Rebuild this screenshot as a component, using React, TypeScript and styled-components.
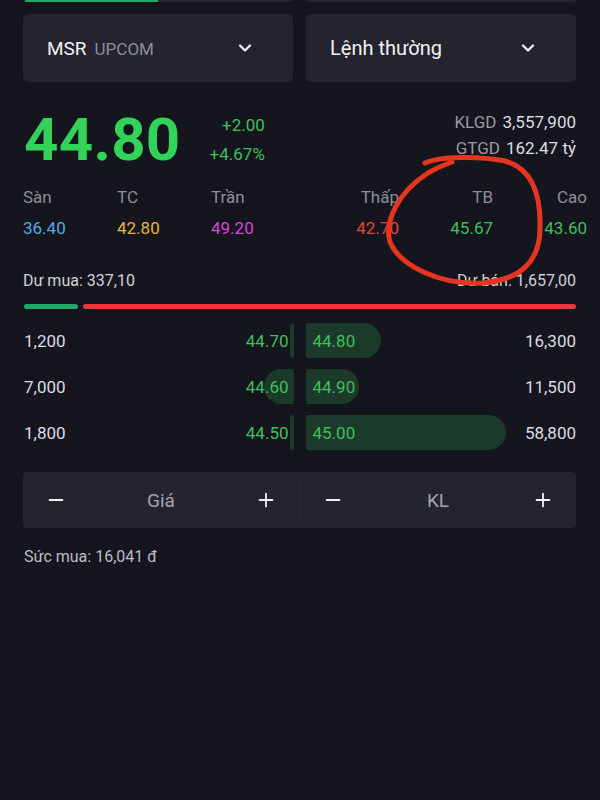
import * as React from "react";
import styled, { createGlobalStyle } from "styled-components";
import { ChevronDown, Minus, Plus } from "lucide-react";

const GlobalStyle = createGlobalStyle`
  html, body {
    margin: 0;
    padding: 0;
    background: #15151e;
  }
  body {
    font-family: Roboto, "Noto Sans", sans-serif;
    color: #e6e6ea;
  }
`;

const Page = styled.div`
  position: relative;
  width: 600px;
  height: 800px;
  box-sizing: border-box;
  padding: 0 24px 0 23px;
  background: #15151e;
  overflow: hidden;
`;

const TopStrip = styled.div`
  display: flex;
  gap: 13px;
  height: 2px;
`;

const StripCard = styled.div`
  flex: 1;
  background: #24242e;
  border-radius: 0 0 3px 3px;
  overflow: hidden;
`;

const StripFill = styled.div<{ $w: number }>`
  width: ${(p) => p.$w}px;
  height: 100%;
  margin-left: 2px;
  background: #1fa868;
`;

const SelectRow = styled.div`
  display: flex;
  gap: 13px;
  margin-top: 12px;
`;

const SelectBox = styled.div`
  flex: 1;
  height: 68px;
  box-sizing: border-box;
  display: flex;
  align-items: center;
  justify-content: space-between;
  padding: 0 38px 0 24px;
  background: #24242e;
  border-radius: 5px;
  color: #f2f2f4;
`;

const SelectText = styled.div`
  display: flex;
  align-items: baseline;
  gap: 8px;
`;

const Symbol = styled.span`
  font-size: 19px;
`;

const Exchange = styled.span`
  font-size: 17px;
  color: #8e8e96;
`;

const OrderType = styled.span`
  font-size: 20px;
`;

const PriceBlock = styled.div`
  display: flex;
  align-items: flex-start;
  margin-top: 23px;
`;

const BigPrice = styled.div`
  font-size: 60px;
  font-weight: 700;
  line-height: 70px;
  color: #33d35a;
  margin-left: 1px;
  letter-spacing: 0.3px;
`;

const ChangeCol = styled.div`
  display: flex;
  flex-direction: column;
  align-items: flex-end;
  gap: 8px;
  margin-left: 29px;
  padding-top: 10px;
  font-size: 17px;
  line-height: 21px;
  color: #3fbf5d;
`;

const VolumeCol = styled.div`
  margin-left: auto;
  display: flex;
  flex-direction: column;
  align-items: flex-end;
  gap: 5px;
  padding-top: 7px;
  font-size: 17px;
  line-height: 21px;
`;

const VolLine = styled.div`
  display: flex;
  gap: 6px;
`;

const VolLabel = styled.span`
  color: #9a9aa2;
`;

const VolValue = styled.span`
  color: #dedee2;
`;

const StatsRow = styled.div`
  display: flex;
  justify-content: space-between;
  margin-top: 11px;
`;

const StatsGroup = styled.div`
  display: flex;
`;

const Stat = styled.div<{ $right?: boolean }>`
  width: 94px;
  display: flex;
  flex-direction: column;
  align-items: ${(p) => (p.$right ? "flex-end" : "flex-start")};
  gap: 9px;
  font-size: 17px;
  line-height: 22px;
`;

const StatLabel = styled.span`
  color: #8e8e96;
`;

const StatValue = styled.span<{ $color: string }>`
  color: ${(p) => p.$color};
`;

const DepthRow = styled.div`
  display: flex;
  justify-content: space-between;
  margin-top: 32px;
  font-size: 16px;
  line-height: 20px;
  color: #d2d2d6;
`;

const RatioBar = styled.div`
  display: flex;
  gap: 5px;
  margin-top: 13px;
  height: 5px;
  padding-left: 1px;
`;

const RatioPart = styled.div<{ $color: string }>`
  height: 100%;
  border-radius: 3px;
  background: ${(p) => p.$color};
`;

const Book = styled.div`
  display: flex;
  flex-direction: column;
  gap: 11px;
  margin-top: 14px;
`;

const BookRow = styled.div`
  display: flex;
  gap: 12px;
  height: 35px;
  font-size: 17px;
`;

const Side = styled.div`
  position: relative;
  flex: 1;
  display: flex;
  align-items: center;
  justify-content: space-between;
`;

const DepthBar = styled.div<{ $side: "bid" | "ask" }>`
  position: absolute;
  top: 0;
  bottom: 0;
  ${(p) => (p.$side === "bid" ? "right: 0;" : "left: 0;")}
  background: #1c3a29;
  border-radius: ${(p) => (p.$side === "bid" ? "18px 2px 2px 18px" : "2px 18px 18px 2px")};
`;

const Qty = styled.span`
  position: relative;
  color: #dcdce0;
  padding-left: 1px;
`;

const BookPrice = styled.span<{ $side: "bid" | "ask" }>`
  position: relative;
  color: #3fbf5d;
  ${(p) => (p.$side === "bid" ? "padding-right: 5px;" : "padding-left: 7px;")}
`;

const InputRow = styled.div`
  display: flex;
  align-items: center;
  height: 56px;
  margin-top: 22px;
  background: #24242e;
  border-radius: 4px;
`;

const Stepper = styled.div`
  flex: 1;
  display: flex;
  align-items: center;
  justify-content: space-between;
  padding: 0 22px;
  color: #f0f0f2;
`;

const Divider = styled.div`
  width: 1px;
  height: 38px;
  background: #292933;
`;

const StepperLabel = styled.span`
  font-size: 19px;
  color: #a2a2aa;
`;

const Power = styled.div`
  margin-top: 19px;
  font-size: 16px;
  color: #bdbdc4;
  padding-left: 1px;
`;

const Annotation = styled.svg`
  position: absolute;
  left: 0;
  top: 0;
  pointer-events: none;
`;

type Level = { qty: string; price: string; bar: number };

const bids: Level[] = [
  { qty: "1,200", price: "44.70", bar: 4 },
  { qty: "7,000", price: "44.60", bar: 30 },
  { qty: "1,800", price: "44.50", bar: 4 },
];

const asks: Level[] = [
  { qty: "16,300", price: "44.80", bar: 75 },
  { qty: "11,500", price: "44.90", bar: 53 },
  { qty: "58,800", price: "45.00", bar: 200 },
];

const leftStats = [
  { label: "Sàn", value: "36.40", color: "#56a8e4" },
  { label: "TC", value: "42.80", color: "#e9b43c" },
  { label: "Trần", value: "49.20", color: "#d945d9" },
];

const rightStats = [
  { label: "Thấp", value: "42.70", color: "#e2443f" },
  { label: "TB", value: "45.67", color: "#3fbf5d" },
  { label: "Cao", value: "43.60", color: "#3fbf5d" },
];

const App: React.FC = () => {
  return (
    <>
      <GlobalStyle />
      <Page>
        <TopStrip>
          <StripCard>
            <StripFill $w={133} />
          </StripCard>
          <StripCard />
        </TopStrip>

        <SelectRow>
          <SelectBox>
            <SelectText>
              <Symbol>MSR</Symbol>
              <Exchange>UPCOM</Exchange>
            </SelectText>
            <ChevronDown size={20} strokeWidth={2.6} />
          </SelectBox>
          <SelectBox>
            <OrderType>Lệnh thường</OrderType>
            <ChevronDown size={20} strokeWidth={2.6} />
          </SelectBox>
        </SelectRow>

        <PriceBlock>
          <BigPrice>44.80</BigPrice>
          <ChangeCol>
            <span>+2.00</span>
            <span>+4.67%</span>
          </ChangeCol>
          <VolumeCol>
            <VolLine>
              <VolLabel>KLGD</VolLabel>
              <VolValue>3,557,900</VolValue>
            </VolLine>
            <VolLine>
              <VolLabel>GTGD</VolLabel>
              <VolValue>162.47 tỷ</VolValue>
            </VolLine>
          </VolumeCol>
        </PriceBlock>

        <StatsRow>
          <StatsGroup>
            {leftStats.map((s) => (
              <Stat key={s.label}>
                <StatLabel>{s.label}</StatLabel>
                <StatValue $color={s.color}>{s.value}</StatValue>
              </Stat>
            ))}
          </StatsGroup>
          <StatsGroup>
            {rightStats.map((s) => (
              <Stat key={s.label} $right>
                <StatLabel>{s.label}</StatLabel>
                <StatValue $color={s.color}>{s.value}</StatValue>
              </Stat>
            ))}
          </StatsGroup>
        </StatsRow>

        <DepthRow>
          <span>Dư mua: 337,10</span>
          <span>Dư bán: 1,657,00</span>
        </DepthRow>

        <RatioBar>
          <RatioPart $color="#1fa868" style={{ width: 54 }} />
          <RatioPart $color="#e8383a" style={{ flex: 1 }} />
        </RatioBar>

        <Book>
          {bids.map((b, i) => (
            <BookRow key={b.price}>
              <Side>
                <DepthBar $side="bid" style={{ width: b.bar }} />
                <Qty>{b.qty}</Qty>
                <BookPrice $side="bid">{b.price}</BookPrice>
              </Side>
              <Side>
                <DepthBar $side="ask" style={{ width: asks[i].bar }} />
                <BookPrice $side="ask">{asks[i].price}</BookPrice>
                <Qty>{asks[i].qty}</Qty>
              </Side>
            </BookRow>
          ))}
        </Book>

        <InputRow>
          <Stepper>
            <Minus size={22} strokeWidth={2} />
            <StepperLabel>Giá</StepperLabel>
            <Plus size={22} strokeWidth={2} />
          </Stepper>
          <Divider />
          <Stepper>
            <Minus size={22} strokeWidth={2} />
            <StepperLabel>KL</StepperLabel>
            <Plus size={22} strokeWidth={2} />
          </Stepper>
        </InputRow>

        <Power>Sức mua: 16,041 đ</Power>

        <Annotation width="600" height="800" viewBox="0 0 600 800">
          <path
            d="M425 163 C440 156, 480 156, 505 161 C530 168, 541 192, 540 228 C540 260, 522 280, 482 283 C440 285, 400 266, 390 242 C384 222, 398 192, 428 173 C438 167, 446 164, 452 162"
            fill="none"
            stroke="#e5341f"
            strokeWidth={5}
            strokeLinecap="round"
            strokeLinejoin="round"
          />
        </Annotation>
      </Page>
    </>
  );
};

export default App;
